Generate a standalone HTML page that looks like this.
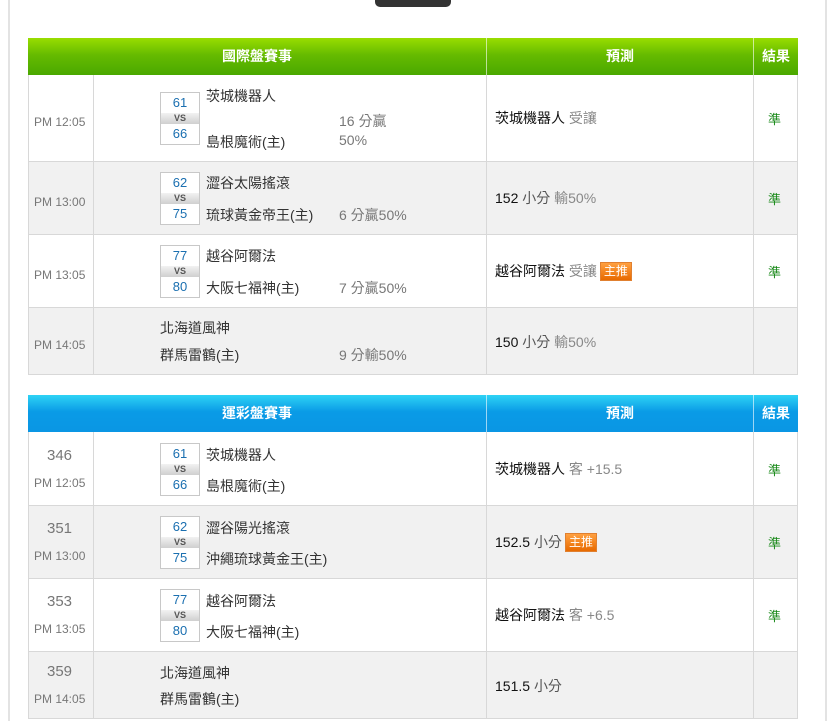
<!DOCTYPE html>
<html><head><meta charset="utf-8"><style>
*{margin:0;padding:0;box-sizing:border-box}
body{width:840px;height:721px;background:#fff;position:relative;overflow:hidden;font-family:"Liberation Sans","Noto Sans CJK TC",sans-serif;color:#222}
.a{position:absolute;white-space:nowrap}
.lb{position:absolute;left:8px;top:0;width:2px;height:721px;background:#e3e3e3}
.rb{position:absolute;left:825px;top:0;width:2px;height:721px;background:#e3e3e3}
.tab{position:absolute;left:375px;top:-6px;width:76px;height:13px;background:#333;border-radius:5px}
.hd{position:absolute;height:37px;color:#fff;font-weight:bold;font-size:14px;line-height:37px;text-align:center;border-right:1px solid rgba(255,255,255,.6)}
.g{background:linear-gradient(#99dd00,#66bb00 45%,#4aa800)}
.b{background:linear-gradient(#2ed3f5,#0a9be6 45%,#0a96e4)}
.row{position:absolute;left:28px;width:770px;border:1px solid #d8d8d8;border-top:none}
.row .c{position:absolute;top:0;bottom:0;border-right:1px solid #d8d8d8}
.t{font-size:12px;color:#777}
.n{font-size:15px;color:#777}
.tm{font-size:14px;color:#333}
.sb{position:absolute;width:40px;border:1px solid #c8c8c8;background:#fff}
.sb div{text-align:center;font-size:13px;color:#1a6fb0;height:20px;line-height:20px}
.sb .v{height:11px;line-height:11px;font-size:9px;color:#555;background:linear-gradient(#f2f2f2,#cfcfcf);font-weight:bold}
.p{font-size:14px;color:#111}
.gy{color:#888}
.ok{font-size:13px;color:#1a8a1a}
.tag{display:inline-block;background:linear-gradient(#ffa040,#e86a00);color:#fff;font-size:12px;line-height:17px;padding:0 3px;border:1px solid #e08030;vertical-align:1px;margin-left:3px}
</style></head><body>
<div class="lb"></div><div class="rb"></div><div class="tab"></div>

<div class="hd g" style="left:28px;top:38px;width:459px">國際盤賽事</div>
<div class="hd g" style="left:487px;top:38px;width:267px">預測</div>
<div class="hd g" style="left:754px;top:38px;width:44px;border-right:none">結果</div>

<div class="row" style="top:75px;height:87px;background:#fff"><div class="c" style="left:0;width:65px"></div><div class="c" style="left:65px;width:393px"></div><div class="c" style="left:458px;width:267px"></div></div>
<div class="row" style="top:162px;height:73px;background:#f1f1f1"><div class="c" style="left:0;width:65px"></div><div class="c" style="left:65px;width:393px"></div><div class="c" style="left:458px;width:267px"></div></div>
<div class="row" style="top:235px;height:73px;background:#fff"><div class="c" style="left:0;width:65px"></div><div class="c" style="left:65px;width:393px"></div><div class="c" style="left:458px;width:267px"></div></div>
<div class="row" style="top:308px;height:67px;background:#f1f1f1"><div class="c" style="left:0;width:65px"></div><div class="c" style="left:65px;width:393px"></div><div class="c" style="left:458px;width:267px"></div></div>

<div class="a t" style="left:34px;top:115px">PM 12:05</div>
<div class="sb" style="left:160px;top:92px"><div>61</div><div class="v">VS</div><div>66</div></div>
<div class="a tm" style="left:206px;top:86px">茨城機器人</div>
<div class="a tm" style="left:206px;top:132px">島根魔術(主)</div>
<div class="a tm" style="left:339px;top:111px;color:#777">16 分贏</div>
<div class="a tm" style="left:339px;top:132px;color:#777">50%</div>
<div class="a p" style="left:495px;top:108px">茨城機器人 <span class="gy">受讓</span></div>
<div class="a ok" style="left:768px;top:109px">準</div>

<div class="a t" style="left:34px;top:195px">PM 13:00</div>
<div class="sb" style="left:160px;top:172px"><div>62</div><div class="v">VS</div><div>75</div></div>
<div class="a tm" style="left:206px;top:173px">澀谷太陽搖滾</div>
<div class="a tm" style="left:206px;top:205px">琉球黃金帝王(主)</div>
<div class="a tm" style="left:339px;top:205px;color:#777">6 分贏50%</div>
<div class="a p" style="left:495px;top:188px">152 <span style="color:#555">小分</span> <span class="gy">輸50%</span></div>
<div class="a ok" style="left:768px;top:189px">準</div>

<div class="a t" style="left:34px;top:268px">PM 13:05</div>
<div class="sb" style="left:160px;top:245px"><div>77</div><div class="v">VS</div><div>80</div></div>
<div class="a tm" style="left:206px;top:246px">越谷阿爾法</div>
<div class="a tm" style="left:206px;top:278px">大阪七福神(主)</div>
<div class="a tm" style="left:339px;top:278px;color:#777">7 分贏50%</div>
<div class="a p" style="left:495px;top:261px">越谷阿爾法 <span class="gy">受讓</span><span class="tag">主推</span></div>
<div class="a ok" style="left:768px;top:262px">準</div>

<div class="a t" style="left:34px;top:338px">PM 14:05</div>
<div class="a tm" style="left:160px;top:318px">北海道風神</div>
<div class="a tm" style="left:160px;top:345px">群馬雷鶴(主)</div>
<div class="a tm" style="left:339px;top:345px;color:#777">9 分輸50%</div>
<div class="a p" style="left:495px;top:332px">150 <span style="color:#555">小分</span> <span class="gy">輸50%</span></div>

<div class="hd b" style="left:28px;top:395px;width:459px">運彩盤賽事</div>
<div class="hd b" style="left:487px;top:395px;width:267px">預測</div>
<div class="hd b" style="left:754px;top:395px;width:44px;border-right:none">結果</div>

<div class="row" style="top:432px;height:74px;background:#fff"><div class="c" style="left:0;width:65px"></div><div class="c" style="left:65px;width:393px"></div><div class="c" style="left:458px;width:267px"></div></div>
<div class="row" style="top:506px;height:73px;background:#f1f1f1"><div class="c" style="left:0;width:65px"></div><div class="c" style="left:65px;width:393px"></div><div class="c" style="left:458px;width:267px"></div></div>
<div class="row" style="top:579px;height:73px;background:#fff"><div class="c" style="left:0;width:65px"></div><div class="c" style="left:65px;width:393px"></div><div class="c" style="left:458px;width:267px"></div></div>
<div class="row" style="top:652px;height:67px;background:#f1f1f1"><div class="c" style="left:0;width:65px"></div><div class="c" style="left:65px;width:393px"></div><div class="c" style="left:458px;width:267px"></div></div>

<div class="a n" style="left:47px;top:447px">346</div>
<div class="a t" style="left:34px;top:476px">PM 12:05</div>
<div class="sb" style="left:160px;top:443px"><div>61</div><div class="v">VS</div><div>66</div></div>
<div class="a tm" style="left:206px;top:445px">茨城機器人</div>
<div class="a tm" style="left:206px;top:476px">島根魔術(主)</div>
<div class="a p" style="left:495px;top:459px">茨城機器人 <span class="gy">客 +15.5</span></div>
<div class="a ok" style="left:768px;top:460px">準</div>

<div class="a n" style="left:47px;top:520px">351</div>
<div class="a t" style="left:34px;top:549px">PM 13:00</div>
<div class="sb" style="left:160px;top:516px"><div>62</div><div class="v">VS</div><div>75</div></div>
<div class="a tm" style="left:206px;top:518px">澀谷陽光搖滾</div>
<div class="a tm" style="left:206px;top:549px">沖繩琉球黃金王(主)</div>
<div class="a p" style="left:495px;top:532px">152.5 <span style="color:#555">小分</span><span class="tag">主推</span></div>
<div class="a ok" style="left:768px;top:533px">準</div>

<div class="a n" style="left:47px;top:593px">353</div>
<div class="a t" style="left:34px;top:622px">PM 13:05</div>
<div class="sb" style="left:160px;top:589px"><div>77</div><div class="v">VS</div><div>80</div></div>
<div class="a tm" style="left:206px;top:591px">越谷阿爾法</div>
<div class="a tm" style="left:206px;top:622px">大阪七福神(主)</div>
<div class="a p" style="left:495px;top:605px">越谷阿爾法 <span class="gy">客 +6.5</span></div>
<div class="a ok" style="left:768px;top:606px">準</div>

<div class="a n" style="left:47px;top:663px">359</div>
<div class="a t" style="left:34px;top:692px">PM 14:05</div>
<div class="a tm" style="left:160px;top:663px">北海道風神</div>
<div class="a tm" style="left:160px;top:689px">群馬雷鶴(主)</div>
<div class="a p" style="left:495px;top:676px">151.5 <span style="color:#555">小分</span></div>
</body></html>
